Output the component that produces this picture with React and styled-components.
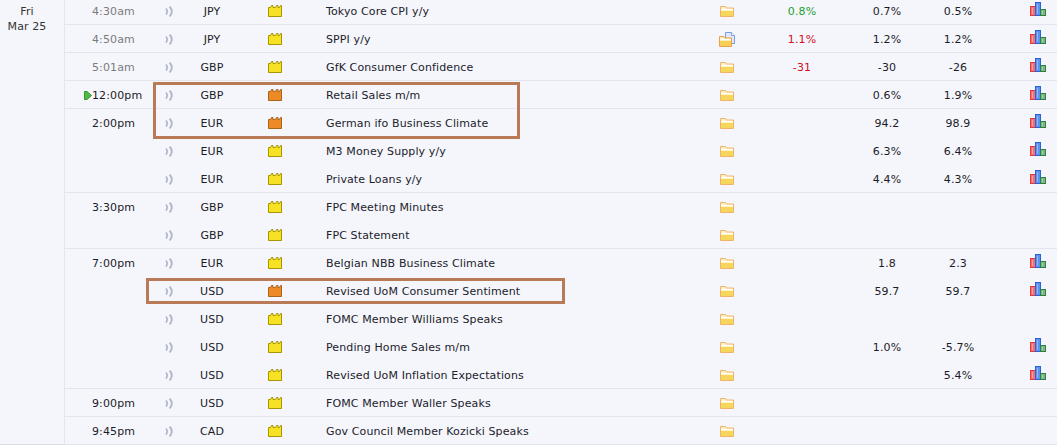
import React from "react";
import styled, { createGlobalStyle } from "styled-components";

const Global = createGlobalStyle`
  html, body { margin: 0; padding: 0; background: #f5f6fb; }
  body { overflow: hidden; width: 1057px; height: 445px; }
`;

const Page = styled.div`
  position: relative;
  display: flex;
  width: 1057px;
  height: 445px;
  overflow: hidden;
  background: #f5f6fb;
  font-family: "DejaVu Sans", Verdana, sans-serif;
  font-size: 11px;
  letter-spacing: 0.12px;
  color: #1c1c28;
`;

const DateCol = styled.div`
  flex: 0 0 64px;
  box-sizing: border-box;
  height: 445px;
  padding: 4px 10px 0 0;
  border-bottom: 1px solid #dcdee6;
  text-align: center;
  line-height: 15px;
  color: #333;
`;

const Rows = styled.div`
  flex: 1;
  margin-top: -3px;
  border-left: 1px solid #e4e6ee;
`;

const Row = styled.div`
  box-sizing: border-box;
  height: 28px;
  padding-top: 2px;
  display: grid;
  grid-template-columns: 27px 65px 23px 64px 62px 20px 386px 30px 120px 50px 92px 1fr;
  align-items: center;
  border-bottom: 1px solid ${p => (p.$end ? "#e4e6ee" : "transparent")};
`;

const Time = styled.span`
  grid-column: 2;
  display: flex;
  align-items: center;
  color: ${p => (p.$past ? "#7b7b7b" : "#1c1c28")};
`;
const Cell = styled.span`
  display: flex;
  justify-content: center;
  align-items: center;
  white-space: nowrap;
`;
const ImpactCell = styled(Cell)`
  padding-bottom: 1px;
`;
const Event = styled.span`
  grid-column: 7;
  white-space: nowrap;
  color: #22222c;
`;
const Actual = styled(Cell)`
  color: ${p => (p.$tone === "up" ? "#1e9e30" : "#d2101e")};
`;
const ChartCell = styled.span`
  display: flex;
  align-self: start;
  margin-top: 3px;
  padding-left: 26px;
`;
const Marker = styled.svg`
  width: 8px;
  height: 9px;
  margin-left: -8px;
  flex: none;
`;
const Box = styled.div`
  position: absolute;
  left: ${p => p.$x}px;
  top: ${p => p.$y}px;
  width: ${p => p.$w}px;
  height: ${p => p.$h}px;
  box-sizing: border-box;
  border: 3px solid #b97a57;
  pointer-events: none;
`;

const Sound = () => (
  <svg width="8" height="11" viewBox="0 0 8 11" fill="none" stroke="#aeb6c7">
    <path d="M1 2.5 C2.6 4.5 2.6 6.5 1 8.5" strokeWidth="1.7" />
    <path d="M4.6 .6 C7.4 3.5 7.4 7.5 4.6 10.4" strokeWidth="2" />
  </svg>
);

const Impact = ({ high }) => (
  <svg width="14" height="12" viewBox="0 0 14 12">
    <path
      d="M.5 11.5V2.5H2.5L3.5 .5H5V2.5H7.5L8.5 .5H10V2.5H11.5L12.5 .5H13.5V11.5Z"
      fill={high ? "#ee8a25" : "#f6e124"}
      stroke={high ? "#a8651e" : "#a89600"}
      strokeWidth="1"
    />
  </svg>
);

const Folder = () => (
  <svg width="14" height="11" viewBox="0 0 14 11">
    <path d="M.5 10.5V.5H5.5L6.5 2H13.5V10.5Z" fill="#fdf3c8" stroke="#eeb46a" />
    <path d="M1 5H13V10H1Z" fill="#f8d65c" />
    <path d="M1 3.5H13" stroke="#fff" />
  </svg>
);

const FolderDoc = () => (
  <svg width="16" height="15" viewBox="0 0 16 15">
    <path d="M6.5.5H12.5L15.5 3.5V11.5H6.5Z" fill="#dfe9fb" stroke="#7d9fde" />
    <path d="M12.5.5V3.5H15.5" fill="#fff" stroke="#7d9fde" />
    <path d="M.5 14.5V4.5H5L6 6H12.5V14.5Z" fill="#fdf0c0" stroke="#ec9f4f" />
    <path d="M1 9H12V14H1Z" fill="#f8cf55" />
    <path d="M1 7.5H12" stroke="#fff" />
  </svg>
);

const Chart = () => (
  <svg width="16" height="14" viewBox="0 0 16 14">
    <rect x=".5" y="4.5" width="5" height="9" fill="#f66f6f" stroke="#e23c3c" />
    <rect x="5.5" y=".5" width="5" height="13" fill="#5f92ef" stroke="#2a62d8" />
    <rect x="10.5" y="7.5" width="5" height="6" fill="#77b886" stroke="#2f7f42" />
    <path d="M2.5 6V12M7.5 2V12M12.5 9V12" stroke="#fff" strokeOpacity=".35" />
  </svg>
);

const data = [
  { t: "4:30am", past: 1, c: "JPY", e: "Tokyo Core CPI y/y", a: "0.8%", tone: "up", f: "0.7%", p: "0.5%", ch: 1, end: 1 },
  { t: "4:50am", past: 1, c: "JPY", e: "SPPI y/y", doc: 1, a: "1.1%", tone: "down", f: "1.2%", p: "1.2%", ch: 1, end: 1 },
  { t: "5:01am", past: 1, c: "GBP", e: "GfK Consumer Confidence", a: "-31", tone: "down", f: "-30", p: "-26", ch: 1, end: 1 },
  { t: "12:00pm", next: 1, c: "GBP", high: 1, e: "Retail Sales m/m", f: "0.6%", p: "1.9%", ch: 1, end: 1 },
  { t: "2:00pm", c: "EUR", high: 1, e: "German ifo Business Climate", f: "94.2", p: "98.9", ch: 1 },
  { c: "EUR", e: "M3 Money Supply y/y", f: "6.3%", p: "6.4%", ch: 1 },
  { c: "EUR", e: "Private Loans y/y", f: "4.4%", p: "4.3%", ch: 1, end: 1 },
  { t: "3:30pm", c: "GBP", e: "FPC Meeting Minutes" },
  { c: "GBP", e: "FPC Statement", end: 1 },
  { t: "7:00pm", c: "EUR", e: "Belgian NBB Business Climate", f: "1.8", p: "2.3", ch: 1 },
  { c: "USD", high: 1, e: "Revised UoM Consumer Sentiment", f: "59.7", p: "59.7", ch: 1 },
  { c: "USD", e: "FOMC Member Williams Speaks" },
  { c: "USD", e: "Pending Home Sales m/m", f: "1.0%", p: "-5.7%", ch: 1 },
  { c: "USD", e: "Revised UoM Inflation Expectations", p: "5.4%", ch: 1, end: 1 },
  { t: "9:00pm", c: "USD", e: "FOMC Member Waller Speaks", end: 1 },
  { t: "9:45pm", c: "CAD", e: "Gov Council Member Kozicki Speaks", end: 1 },
];

export default function App() {
  return (
    <Page>
      <Global />
      <DateCol>
        Fri
        <br />
        Mar 25
      </DateCol>
      <Rows>
        {data.map(r => (
          <Row key={r.e} $end={r.end}>
            <Time $past={r.past}>
              {r.next && (
                <Marker viewBox="0 0 8 9">
                  <path d="M.5.5H3L7.5 4.5 3 8.5H.5Z" fill="#52b848" stroke="#2c9a2c" />
                </Marker>
              )}
              {r.t}
            </Time>
            <Cell><Sound /></Cell>
            <Cell>{r.c}</Cell>
            <ImpactCell><Impact high={r.high} /></ImpactCell>
            <Event>{r.e}</Event>
            <Cell>{r.doc ? <FolderDoc /> : <Folder />}</Cell>
            <Actual $tone={r.tone}>{r.a}</Actual>
            <Cell>{r.f}</Cell>
            <Cell>{r.p}</Cell>
            <ChartCell>{r.ch && <Chart />}</ChartCell>
          </Row>
        ))}
      </Rows>
      <Box $x={153} $y={82} $w={367} $h={57} />
      <Box $x={146} $y={278} $w={419} $h={26} />
    </Page>
  );
}
